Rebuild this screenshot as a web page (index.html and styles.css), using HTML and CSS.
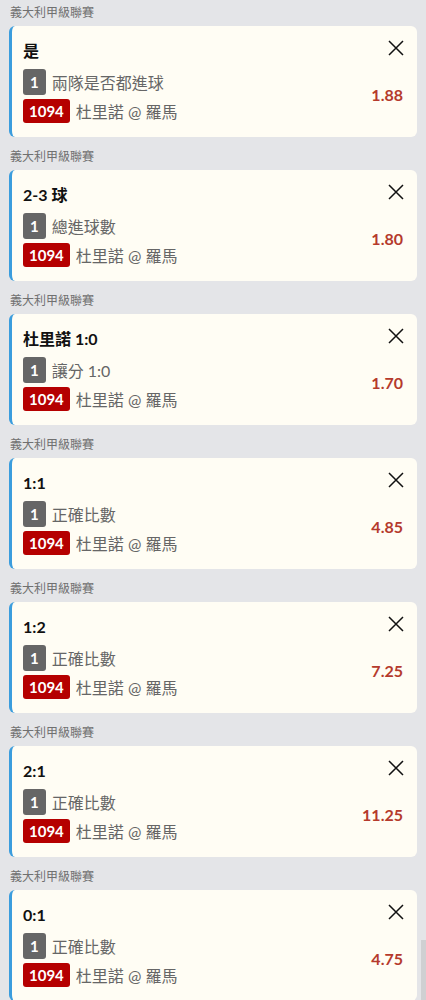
FILE: index.html
```html
<!DOCTYPE html>
<html lang="zh-Hant">
<head>
    <meta charset="UTF-8">
    <meta name="viewport" content="width=device-width, initial-scale=1.0">
    <title>投注單</title>
    <link rel="stylesheet" href="styles.css">
</head>
<body>
    <div class="bet-list">

        <div class="bet-group">
            <div class="league">義大利甲級聯賽</div>
            <div class="bet-card">
                <div class="bet-head">
                    <span class="bet-pick">是</span>
                    <span class="close-btn"><svg width="16" height="16" viewBox="0 0 16 16"><path d="M1 1L15 15M15 1L1 15" stroke="#111" stroke-width="1.5" fill="none"/></svg></span>
                </div>
                <div class="bet-body">
                    <div class="bet-info">
                        <div class="bet-row"><span class="badge badge-grey">1</span><span class="row-text">兩隊是否都進球</span></div>
                        <div class="bet-row"><span class="badge badge-red">1094</span><span class="row-text">杜里諾 @ 羅馬</span></div>
                    </div>
                    <div class="odds">1.88</div>
                </div>
            </div>
        </div>

        <div class="bet-group">
            <div class="league">義大利甲級聯賽</div>
            <div class="bet-card">
                <div class="bet-head">
                    <span class="bet-pick">2-3 球</span>
                    <span class="close-btn"><svg width="16" height="16" viewBox="0 0 16 16"><path d="M1 1L15 15M15 1L1 15" stroke="#111" stroke-width="1.5" fill="none"/></svg></span>
                </div>
                <div class="bet-body">
                    <div class="bet-info">
                        <div class="bet-row"><span class="badge badge-grey">1</span><span class="row-text">總進球數</span></div>
                        <div class="bet-row"><span class="badge badge-red">1094</span><span class="row-text">杜里諾 @ 羅馬</span></div>
                    </div>
                    <div class="odds">1.80</div>
                </div>
            </div>
        </div>

        <div class="bet-group">
            <div class="league">義大利甲級聯賽</div>
            <div class="bet-card">
                <div class="bet-head">
                    <span class="bet-pick">杜里諾 1:0</span>
                    <span class="close-btn"><svg width="16" height="16" viewBox="0 0 16 16"><path d="M1 1L15 15M15 1L1 15" stroke="#111" stroke-width="1.5" fill="none"/></svg></span>
                </div>
                <div class="bet-body">
                    <div class="bet-info">
                        <div class="bet-row"><span class="badge badge-grey">1</span><span class="row-text">讓分 1:0</span></div>
                        <div class="bet-row"><span class="badge badge-red">1094</span><span class="row-text">杜里諾 @ 羅馬</span></div>
                    </div>
                    <div class="odds">1.70</div>
                </div>
            </div>
        </div>

        <div class="bet-group">
            <div class="league">義大利甲級聯賽</div>
            <div class="bet-card">
                <div class="bet-head">
                    <span class="bet-pick">1:1</span>
                    <span class="close-btn"><svg width="16" height="16" viewBox="0 0 16 16"><path d="M1 1L15 15M15 1L1 15" stroke="#111" stroke-width="1.5" fill="none"/></svg></span>
                </div>
                <div class="bet-body">
                    <div class="bet-info">
                        <div class="bet-row"><span class="badge badge-grey">1</span><span class="row-text">正確比數</span></div>
                        <div class="bet-row"><span class="badge badge-red">1094</span><span class="row-text">杜里諾 @ 羅馬</span></div>
                    </div>
                    <div class="odds">4.85</div>
                </div>
            </div>
        </div>

        <div class="bet-group">
            <div class="league">義大利甲級聯賽</div>
            <div class="bet-card">
                <div class="bet-head">
                    <span class="bet-pick">1:2</span>
                    <span class="close-btn"><svg width="16" height="16" viewBox="0 0 16 16"><path d="M1 1L15 15M15 1L1 15" stroke="#111" stroke-width="1.5" fill="none"/></svg></span>
                </div>
                <div class="bet-body">
                    <div class="bet-info">
                        <div class="bet-row"><span class="badge badge-grey">1</span><span class="row-text">正確比數</span></div>
                        <div class="bet-row"><span class="badge badge-red">1094</span><span class="row-text">杜里諾 @ 羅馬</span></div>
                    </div>
                    <div class="odds">7.25</div>
                </div>
            </div>
        </div>

        <div class="bet-group">
            <div class="league">義大利甲級聯賽</div>
            <div class="bet-card">
                <div class="bet-head">
                    <span class="bet-pick">2:1</span>
                    <span class="close-btn"><svg width="16" height="16" viewBox="0 0 16 16"><path d="M1 1L15 15M15 1L1 15" stroke="#111" stroke-width="1.5" fill="none"/></svg></span>
                </div>
                <div class="bet-body">
                    <div class="bet-info">
                        <div class="bet-row"><span class="badge badge-grey">1</span><span class="row-text">正確比數</span></div>
                        <div class="bet-row"><span class="badge badge-red">1094</span><span class="row-text">杜里諾 @ 羅馬</span></div>
                    </div>
                    <div class="odds">11.25</div>
                </div>
            </div>
        </div>

        <div class="bet-group">
            <div class="league">義大利甲級聯賽</div>
            <div class="bet-card">
                <div class="bet-head">
                    <span class="bet-pick">0:1</span>
                    <span class="close-btn"><svg width="16" height="16" viewBox="0 0 16 16"><path d="M1 1L15 15M15 1L1 15" stroke="#111" stroke-width="1.5" fill="none"/></svg></span>
                </div>
                <div class="bet-body">
                    <div class="bet-info">
                        <div class="bet-row"><span class="badge badge-grey">1</span><span class="row-text">正確比數</span></div>
                        <div class="bet-row"><span class="badge badge-red">1094</span><span class="row-text">杜里諾 @ 羅馬</span></div>
                    </div>
                    <div class="odds">4.75</div>
                </div>
            </div>
        </div>

    </div>

    <div class="scroll-thumb"></div>
</body>
</html>
```

FILE: styles.css
```css
body {
    font-family: Lato, 'Noto Sans CJK TC', sans-serif;
    margin: 0;
    background-color: #e4e5e8;
    overflow: hidden;
}

.bet-list {
    padding: 0 9px 0 9px;
}

.bet-group {
    padding-bottom: 7px;
}

.league {
    height: 26px;
    line-height: 26px;
    font-size: 12px;
    font-weight: normal;
    color: #707070;
    padding-left: 1px;
}

.bet-card {
    background-color: #fffdf4;
    border-left: 3px solid #3b9ddd;
    border-radius: 6px;
    padding: 12px 13px 14px 11px;
}

.bet-head {
    display: flex;
    justify-content: space-between;
    align-items: center;
    height: 24px;
}

.bet-pick {
    font-weight: bold;
    font-size: 16px;
    color: #111;
}

.close-btn {
    display: flex;
    width: 16px;
    height: 16px;
    margin-top: -4px;
}

.bet-body {
    display: flex;
    justify-content: space-between;
    align-items: center;
    margin-top: 7px;
}

.bet-info {
    display: flex;
    flex-direction: column;
    gap: 4px;
}

.bet-row {
    display: flex;
    align-items: center;
}

.badge {
    display: inline-block;
    color: #fff;
    font-weight: bold;
    font-size: 15px;
    border-radius: 3px;
}

.badge-grey {
    background-color: #666;
    height: 26px;
    line-height: 26px;
    padding: 0 7px;
}

.badge-red {
    background-color: #b50000;
    height: 24px;
    line-height: 24px;
    padding: 0 6px;
}

.row-text {
    font-size: 16px;
    color: #666;
    margin-left: 6px;
}

.odds {
    font-weight: bold;
    font-size: 16px;
    color: #b53a2c;
    margin-right: 1px;
    margin-bottom: 4px;
}

.scroll-thumb {
    position: fixed;
    right: 0;
    top: 940px;
    width: 5px;
    height: 60px;
    background-color: #cfd0d2;
}
```
